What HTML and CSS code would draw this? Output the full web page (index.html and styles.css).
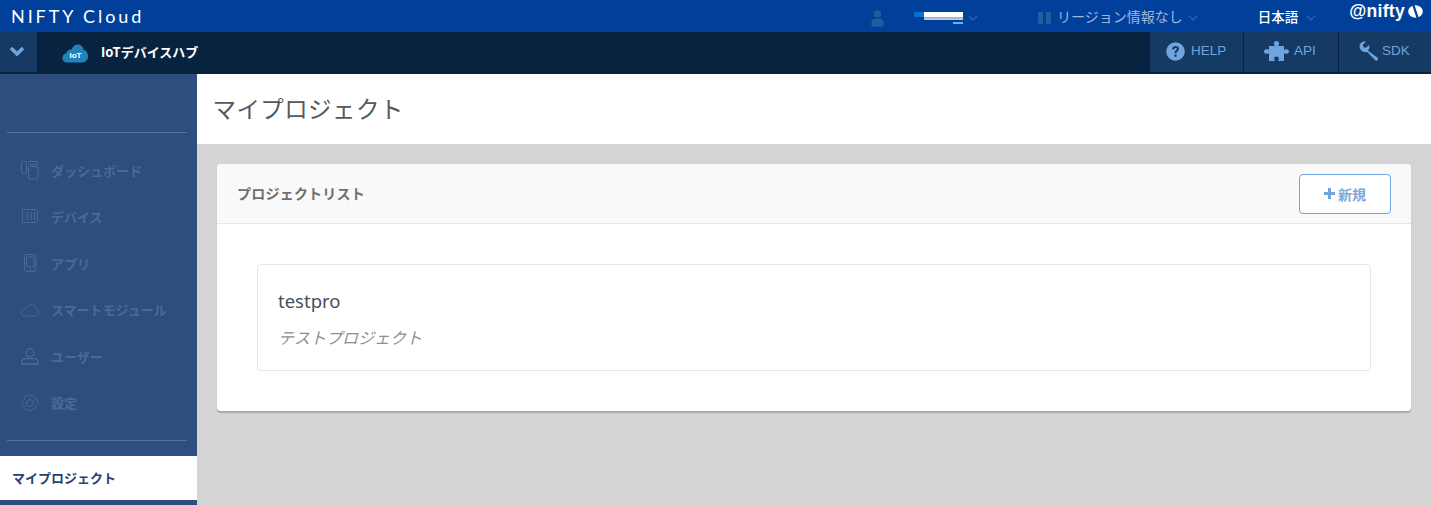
FILE: index.html
```html
<!DOCTYPE html>
<html lang="ja">
<head>
<meta charset="utf-8">
<title>マイプロジェクト</title>
<link rel="stylesheet" href="styles.css">
</head>
<body>
<header class="topbar">
  <div class="brand">NIFTY Cloud</div>
  <div class="top-right">
    <svg class="user-icon" width="13" height="17" viewBox="0 0 13 17"><circle cx="6.500" cy="4" r="3.600" fill="#1c5f9e"/><path d="M.5 16.500v-4c0-3 2-4 6-4s6 1 6 4v4z" fill="#1c5f9e"/></svg>
    <div class="redacted"><span class="r-blue"></span><span class="r-white"></span><span class="r-under"></span></div>
    <svg class="chev chev-user" width="10" height="6" viewBox="0 0 10 6"><path d="M1 1l4 4 4-4" fill="none" stroke="#2f68ab" stroke-width="1.200"/></svg>
    <span class="region-icon"><i></i><i></i></span>
    <span class="region">リージョン情報なし</span>
    <svg class="chev chev-region" width="10" height="6" viewBox="0 0 10 6"><path d="M1 1l4 4 4-4" fill="none" stroke="#2f68ab" stroke-width="1.200"/></svg>
    <span class="lang">日本語</span>
    <svg class="chev chev-lang" width="10" height="6" viewBox="0 0 10 6"><path d="M1 1l4 4 4-4" fill="none" stroke="#2f68ab" stroke-width="1.200"/></svg>
    <span class="nifty">@nifty<svg class="nifty-mark" width="15" height="13" viewBox="0 0 15 13"><ellipse cx="7.500" cy="6.500" rx="7.300" ry="6.200" fill="#fff"/><path d="M4.200 0h2.300l4.300 13H8.500z" fill="#00409a"/></svg></span>
  </div>
</header>
<nav class="subbar">
  <div class="toggle"><svg width="16" height="11" viewBox="0 0 16 11"><path d="M2 2l6 6 6-6" fill="none" stroke="#6fa5dc" stroke-width="3.600"/></svg></div>
  <svg class="iot-logo" width="26" height="19" viewBox="0 0 26 19"><path d="M5 18.500a4.500 4.500 0 0 1-1-8.900C5 6 7.500 5 9.500 5.500 11 2 13 .5 16 .5c3 0 5 2 5.500 5 2.500 1 4.500 3.500 4.500 6.500a6 6 0 0 1-5.500 6.500z" fill="#2283bc"/><text x="7.500" y="13.500" class="iot-text">IoT</text></svg>
  <span class="service">IoTデバイスハブ</span>
  <div class="tools">
    <a class="tool tool-help"><svg width="19" height="19" viewBox="0 0 18 18"><circle cx="9" cy="9" r="8.800" fill="#6fa5dc"/><path d="M5.800 7c0-2.200 1.400-3.300 3.400-3.300 1.900 0 3.200 1.100 3.200 2.800 0 2.300-2.400 2.400-2.400 4.200H8c0-2.800 2.200-2.900 2.200-4.100 0-.6-.4-1-1.100-1-.8 0-1.200.5-1.300 1.400z" fill="#153a63"/><rect x="8" y="11.800" width="2" height="2.200" fill="#153a63"/></svg>HELP</a>
    <a class="tool tool-api"><svg width="25" height="20" viewBox="0 0 25 20"><path d="M5 5h5.500C11 5 10.500 4 10 3.200 9.500 1.500 10.500 0 12.500 0s3 1.500 2.500 3.200C14.500 4 14 5 14.500 5H20v3.500c0 .5.800.2 1.500-.2C23.300 7.800 25 8.800 25 10.500s-1.700 2.700-3.500 2.200c-.7-.4-1.500-.7-1.500-.2V20h-5.500c-.5 0-.2-.8.2-1.500.5-1.700-.7-3-2.200-3s-2.700 1.300-2.200 3c.4.700.7 1.500.2 1.500H5v-7.500c0-.5-.8-.2-1.500.2C1.700 13.200 0 12.200 0 10.500s1.700-2.700 3.500-2.200C4.200 8.700 5 9 5 8.500z" fill="#6fa5dc"/></svg>API</a>
    <a class="tool tool-sdk"><svg width="20" height="20" viewBox="0 0 20 20"><path d="M.6 5.500C.5 2.500 3.400-.2 7 .8L3.800 3.600 4.500 6.200l2.600.6L10 4c.8 2.300.3 4.400-1.200 5.500l9.800 7.200c1.400 1.300-.8 3.900-2.300 2.600L8.200 11C4.500 11.800.8 9.500.6 5.500z" fill="#6fa5dc"/></svg>SDK</a>
  </div>
</nav>
<div class="layout">
  <aside class="sidebar">
    <ul class="menu">
      <li class="item"><svg class="mi" width="18" height="19" viewBox="0 0 18 19" fill="none" stroke="#4d6a96"><rect x=".5" y=".5" width="5" height="12" rx="1"/><rect x="7.500" y=".5" width="9.500" height="3" rx="1"/><rect x="7.500" y="5.500" width="9.500" height="12.500" rx="1"/></svg><span>ダッシュボード</span></li>
      <li class="item"><svg class="mi" width="18" height="15" viewBox="0 0 18 15" fill="none" stroke="#4d6a96"><rect x="1.500" y=".5" width="15" height="13" rx="1"/><path d="M4 4h4M4 7h4M4 10h4M10.500 3v8M13.500 3v8"/></svg><span>デバイス</span></li>
      <li class="item"><svg class="mi" width="18" height="19" viewBox="0 0 18 19" fill="none" stroke="#4d6a96"><rect x="3.500" y=".5" width="11.500" height="17" rx="2"/><path d="M5.500 3h7.500v10H5.500z"/><path d="M8 15.500h2"/></svg><span>アプリ</span></li>
      <li class="item"><svg class="mi" width="18" height="14" viewBox="0 0 18 14" fill="none" stroke="#4d6a96"><path d="M4 13a3.500 3.500 0 0 1-.5-7C4.500 4 6 3.500 7 4c1-2 2.500-3.500 5-3 2 .5 3 2 3 4 1.500.5 2.500 2 2.500 4s-1.500 4-4 4z"/></svg><span>スマートモジュール</span></li>
      <li class="item"><svg class="mi" width="18" height="17" viewBox="0 0 18 17" fill="none" stroke="#4d6a96" stroke-width="1.300"><circle cx="9" cy="4.700" r="4"/><path d="M1 16v-2c0-2 1.500-3.300 3.500-3.300h9c2 0 3.500 1.300 3.500 3.300v2z"/></svg><span>ユーザー</span></li>
      <li class="item"><svg class="mi" width="18" height="18" viewBox="0 0 18 18" fill="none" stroke="#4d6a96"><circle cx="9" cy="9" r="3.500"/><path d="M9 .8c1.200 0 1.700.8 2 1.800.8-.4 2-.7 3 0 1 .8 1 2 .6 3 1 .3 2.400 1 2.400 3.400 0 2-1.400 2.800-2.400 3 .4 1 .4 2.200-.6 3-1 .7-2.200.4-3 0-.3 1-.8 1.800-2 1.800s-1.700-.8-2-1.800c-.8.400-2 .7-3 0-1-.8-1-2-.6-3C2.400 11.800 1 11 1 9c0-2.400 1.400-3.100 2.400-3.400-.4-1-.4-2.200.6-3 1-.7 2.200-.4 3 0 .3-1 .8-1.800 2-1.800z"/></svg><span>設定</span></li>
    </ul>
    <a class="current">マイプロジェクト</a>
  </aside>
  <main class="main">
    <div class="page-head"><h1>マイプロジェクト</h1></div>
    <div class="content">
      <section class="panel">
        <div class="panel-head">
          <h2>プロジェクトリスト</h2>
          <button class="new-btn"><svg width="11" height="11" viewBox="0 0 11 11"><path d="M4 0h3v4h4v3H7v4H4V7H0V4h4z" fill="#6fa5dc"/></svg>新規</button>
        </div>
        <div class="panel-body">
          <div class="project">
            <div class="project-name">testpro</div>
            <div class="project-desc">テストプロジェクト</div>
          </div>
        </div>
      </section>
    </div>
  </main>
</div>
</body>
</html>
```
FILE: styles.css
```css
* { box-sizing: border-box; }
html, body { margin: 0; padding: 0; height: 505px; overflow: hidden; }
body { font-family: "Noto Sans", "Noto Sans CJK JP", sans-serif; background: #d4d4d4; color: #4a4a4a; }
.topbar { height: 32px; background: #00409a; display: flex; align-items: center; color: #fff; }
.brand { margin-left: 11px; font-family: Lato, sans-serif; font-size: 18px; letter-spacing: 2.900px; line-height: 28px; }
.top-right { margin-left: auto; display: flex; align-items: center; }
.user-icon { margin-right: 31px; margin-top: 4px; }
.redacted { width: 49px; height: 12px; position: relative; margin-top: 4px; margin-left: -1px; }
.r-blue { position: absolute; left: 0; top: 0; width: 10px; height: 5px; background: #0a6fd0; }
.r-white { position: absolute; left: 10px; top: 0; width: 39px; height: 8px; background: linear-gradient(#fff 60%, #9aa9cf 60%, #c8d0e4); }
.r-under { position: absolute; left: 39px; top: 10px; width: 10px; height: 2px; background: #5db4f0; }
.chev { display: block; margin-top: 3px; }
.chev-user { margin-left: 5px; margin-right: 60px; }
.region-icon { display: flex; gap: 3px; margin-right: 6px; margin-top: 3px; }
.region-icon i { display: block; width: 5px; height: 12px; background: #1c5f9e; }
.region { font-size: 14px; color: #9fb7dc; line-height: 20px; font-family: "Noto Sans CJK JP", sans-serif; }
.chev-region { margin-left: 5px; margin-right: 60px; }
.lang { font-size: 13.500px; font-weight: 500; color: #fff; font-family: "Noto Sans CJK JP", sans-serif; }
.chev-lang { margin-left: 8px; margin-right: 33px; }
.nifty { font-family: "Liberation Sans", sans-serif; font-size: 17.500px; font-weight: 700; letter-spacing: .3px; display: flex; align-items: center; margin-right: 8px; margin-top: -10px; }
.nifty-mark { margin-left: 3px; }
.subbar { height: 42px; background: #07233f; display: flex; align-items: flex-start; }
.toggle { width: 37px; height: 40px; background: #153a63; display: flex; align-items: center; justify-content: center; padding-right: 4px; padding-bottom: 2px; }
.iot-logo { margin: 12px 0 0 25px; }
.iot-text { font: 700 8px "Liberation Sans", sans-serif; fill: #fff; }
.service { margin: 10px 0 0 13px; font: 700 13px/20px "Noto Sans CJK JP", sans-serif; color: #fff; }
.tools { margin-left: auto; display: flex; height: 40px; }
.tool { height: 40px; display: flex; align-items: center; background: #153a63; color: #6fa5dc; font: 13.500px/38px "Liberation Sans", sans-serif; gap: 6px; border-left: 1px solid #07233f; padding-bottom: 2px; }
.tool-help { width: 94px; padding-left: 16px; }
.tool-api { width: 95px; padding-left: 20px; gap: 5px; }
.tool-sdk { width: 93px; padding-left: 20px; gap: 3px; }
.layout { display: flex; height: 431px; }
.sidebar { width: 197px; flex: none; background: #2e4e7f; padding-top: 58px; display: flex; flex-direction: column; }
.menu { list-style: none; margin: 0 10px 0 7px; padding: 14px 0 13px; border-top: 1px solid #5b739b; border-bottom: 1px solid #5b739b; height: 309px; }
.item { height: 46.500px; display: flex; align-items: center; color: #4d6a96; font-size: 13px; font-weight: 700; font-family: "Noto Sans CJK JP", sans-serif; padding-left: 14px; }
.item .mi { margin-right: 12px; flex: none; }
.current { display: block; margin-top: 15px; height: 44px; background: #fff; color: #26426f; font: 700 13px/44px "Noto Sans CJK JP", sans-serif; padding-left: 12px; }
.main { flex: 1; min-width: 0; display: flex; flex-direction: column; }
.page-head { height: 70px; background: #fff; display: flex; align-items: center; padding: 0 0 2px 15.500px; }
h1 { margin: 0; font: 400 23.500px/32px "Noto Sans CJK JP", sans-serif; color: #55595c; letter-spacing: .4px; }
.content { padding: 20px 20px 0; }
.panel { background: #fff; border-radius: 4px; box-shadow: 0 2px 1px #a9a9a9; overflow: hidden; }
.panel-head { height: 60px; background: #f9f9f9; border-bottom: 1px solid #e6e6e6; display: flex; align-items: center; justify-content: space-between; padding: 0 20px; }
h2 { margin: 0; font: 700 14px/20px "Noto Sans CJK JP", sans-serif; color: #6e6e6e; letter-spacing: .22px; position: relative; top: -1px; }
.new-btn { width: 92px; height: 40px; background: #fff; border: 1px solid #6fa5dc; border-radius: 4px; color: #7ea9da; font: 700 14px "Noto Sans CJK JP", sans-serif; display: flex; align-items: center; justify-content: center; gap: 3px; padding: 0; }
.panel-body { padding: 40px; }
.project { height: 107px; border: 1px solid #e6e6e6; border-radius: 4px; padding: 0 20px; }
.project-name { margin-top: 23px; font: 400 18.500px/26px "Noto Sans", sans-serif; color: #4a4f55; }
.project-desc { margin-top: 11px; font: italic 400 16px/24px "Noto Sans CJK JP", sans-serif; color: #8e8e8e; }
```
